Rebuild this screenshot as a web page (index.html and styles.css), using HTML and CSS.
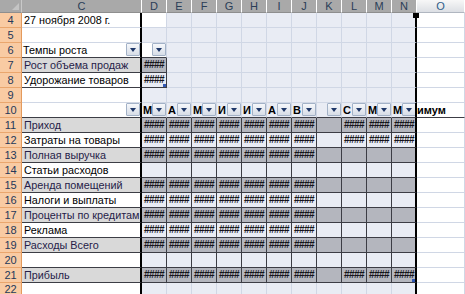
FILE: index.html
```html
<!DOCTYPE html>
<html lang="ru">
<head>
  <meta charset="UTF-8">
  <title>Бюджет</title>
  <link rel="stylesheet" href="styles.css">
</head>
<body>

<div class="sheet">
  <!-- Заголовки столбцов -->
  <div class="row hdr">
    <div class="corner"></div>
    <div>C</div><div>D</div><div>E</div><div>F</div><div>G</div><div>H</div>
    <div>I</div><div>J</div><div>K</div><div>L</div><div>M</div><div>N</div>
    <div class="oh">O</div>
  </div>

  <div class="row">
    <div class="rh">4</div>
    <div class="c">27 ноября 2008 г.</div>
    <div class="w"></div>
    <div></div><div></div><div></div><div></div><div></div><div></div><div></div><div></div><div></div>
    <div class="n top"></div>
    <div class="o"></div>
  </div>

  <div class="row">
    <div class="rh">5</div>
    <div class="c"></div>
    <div></div><div></div><div></div><div></div><div></div><div></div><div></div><div></div><div></div><div></div>
    <div class="n"></div>
    <div class="o"></div>
  </div>

  <div class="row">
    <div class="rh">6</div>
    <div class="c k f">Темпы роста<span class="dd"></span></div>
    <div class="w k f"><span class="dd"></span></div>
    <div></div><div></div><div></div><div></div><div></div><div></div><div></div><div></div><div></div>
    <div class="n"></div>
    <div class="o"></div>
  </div>

  <div class="row alt">
    <div class="rh">7</div>
    <div class="c k">Рост объема продаж</div>
    <div class="d">####</div>
    <div></div><div></div><div></div><div></div><div></div><div></div><div></div><div></div><div></div>
    <div class="n"></div>
    <div class="o"></div>
  </div>

  <div class="row">
    <div class="rh">8</div>
    <div class="c k">Удорожание товаров</div>
    <div class="d sel">####</div>
    <div></div><div></div><div></div><div></div><div></div><div></div><div></div><div></div><div></div>
    <div class="n"></div>
    <div class="o"></div>
  </div>

  <div class="row">
    <div class="rh">9</div>
    <div class="c"></div>
    <div></div><div></div><div></div><div></div><div></div><div></div><div></div><div></div><div></div><div></div>
    <div class="n"></div>
    <div class="o"></div>
  </div>

  <!-- Строка фильтров -->
  <div class="row flt">
    <div class="rh">10</div>
    <div class="c k f"><span class="dd"></span></div>
    <div class="f b">М<span class="dd"></span></div>
    <div class="f b">А<span class="dd"></span></div>
    <div class="f b">М<span class="dd"></span></div>
    <div class="f b">И<span class="dd"></span></div>
    <div class="f b">И<span class="dd"></span></div>
    <div class="f b">А<span class="dd"></span></div>
    <div class="f b">В<span class="dd"></span></div>
    <div class="f b"><span class="dd"></span></div>
    <div class="f b">С<span class="dd"></span></div>
    <div class="f b">М<span class="dd"></span></div>
    <div class="f b n">М<span class="dd"></span></div>
    <div class="o b">имум</div>
  </div>

  <div class="row alt">
    <div class="rh">11</div>
    <div class="c k">Приход</div>
    <div class="d">####</div><div class="d">####</div><div class="d">####</div><div class="d">####</div>
    <div class="d">####</div><div class="d">####</div><div class="d">####</div>
    <div class="d"></div>
    <div class="d">####</div><div class="d">####</div><div class="d n">####</div>
    <div class="o"></div>
  </div>

  <div class="row">
    <div class="rh">12</div>
    <div class="c k">Затраты на товары</div>
    <div class="d">####</div><div class="d">####</div><div class="d">####</div><div class="d">####</div>
    <div class="d">####</div><div class="d">####</div><div class="d">####</div>
    <div class="d"></div>
    <div class="d">####</div><div class="d">####</div><div class="d n">####</div>
    <div class="o"></div>
  </div>

  <div class="row alt">
    <div class="rh">13</div>
    <div class="c k">Полная выручка</div>
    <div class="d">####</div><div class="d">####</div><div class="d">####</div><div class="d">####</div>
    <div class="d">####</div><div class="d">####</div><div class="d">####</div>
    <div class="d"></div><div class="d"></div><div class="d"></div><div class="d n"></div>
    <div class="o"></div>
  </div>

  <div class="row">
    <div class="rh">14</div>
    <div class="c k">Статьи расходов</div>
    <div class="d"></div><div class="d"></div><div class="d"></div><div class="d"></div>
    <div class="d"></div><div class="d"></div><div class="d"></div>
    <div class="d"></div><div class="d"></div><div class="d"></div><div class="d n"></div>
    <div class="o"></div>
  </div>

  <div class="row alt">
    <div class="rh">15</div>
    <div class="c k">Аренда помещений</div>
    <div class="d">####</div><div class="d">####</div><div class="d">####</div><div class="d">####</div>
    <div class="d">####</div><div class="d">####</div><div class="d">####</div>
    <div class="d"></div><div class="d"></div><div class="d"></div><div class="d n"></div>
    <div class="o"></div>
  </div>

  <div class="row">
    <div class="rh">16</div>
    <div class="c k">Налоги и выплаты</div>
    <div class="d">####</div><div class="d">####</div><div class="d">####</div><div class="d">####</div>
    <div class="d">####</div><div class="d">####</div><div class="d">####</div>
    <div class="d"></div><div class="d"></div><div class="d"></div><div class="d n"></div>
    <div class="o"></div>
  </div>

  <div class="row alt">
    <div class="rh">17</div>
    <div class="c k">Проценты по кредитам</div>
    <div class="d">####</div><div class="d">####</div><div class="d">####</div><div class="d">####</div>
    <div class="d">####</div><div class="d">####</div><div class="d">####</div>
    <div class="d"></div><div class="d"></div><div class="d"></div><div class="d n"></div>
    <div class="o"></div>
  </div>

  <div class="row">
    <div class="rh">18</div>
    <div class="c k">Реклама</div>
    <div class="d">####</div><div class="d">####</div><div class="d">####</div><div class="d">####</div>
    <div class="d">####</div><div class="d">####</div><div class="d">####</div>
    <div class="d"></div><div class="d"></div><div class="d"></div><div class="d n"></div>
    <div class="o"></div>
  </div>

  <div class="row alt">
    <div class="rh">19</div>
    <div class="c k">Расходы Всего</div>
    <div class="d">####</div><div class="d">####</div><div class="d">####</div><div class="d">####</div>
    <div class="d">####</div><div class="d">####</div><div class="d">####</div>
    <div class="d"></div><div class="d"></div><div class="d"></div><div class="d n"></div>
    <div class="o"></div>
  </div>

  <div class="row">
    <div class="rh">20</div>
    <div class="c k"></div>
    <div class="d"></div><div class="d"></div><div class="d"></div><div class="d"></div>
    <div class="d"></div><div class="d"></div><div class="d"></div>
    <div class="d"></div><div class="d"></div><div class="d"></div><div class="d n"></div>
    <div class="o"></div>
  </div>

  <div class="row alt">
    <div class="rh">21</div>
    <div class="c k">Прибыль</div>
    <div class="d">####</div><div class="d">####</div><div class="d">####</div><div class="d">####</div>
    <div class="d">####</div><div class="d">####</div><div class="d">####</div>
    <div class="d"></div>
    <div class="d">####</div><div class="d">####</div><div class="d n sel">####</div>
    <div class="o"></div>
  </div>

  <div class="row last">
    <div class="rh">22</div>
    <div class="c"></div>
    <div></div><div></div><div></div><div></div><div></div><div></div><div></div><div></div><div></div><div></div>
    <div class="n"></div>
    <div class="o"></div>
  </div>
</div>

</body>
</html>
```

FILE: styles.css
```css
:root {
  --grid: #d0d7e5;
  --cell: #e9ecf4;
  --dark: #3c3d45;
  --head: #a9a9a9;
  --row-head: #f9cba3;
}

body {
  margin: 0;
  background: #fff;
  font-family: 'Liberation Sans', Arial, sans-serif;
  font-size: 10.8px;
  color: #000;
  overflow: hidden;
}

.sheet {
  width: 465px;
  height: 294px;
  overflow: hidden;
}

.row {
  display: grid;
  grid-template-columns: 22px 120px repeat(11, 25px) 1fr;
  height: 15px;
}

.row > div {
  box-sizing: border-box;
  background: var(--cell);
  border-right: 1px solid var(--grid);
  border-bottom: 1px solid var(--grid);
  line-height: 14px;
  white-space: nowrap;
  overflow: hidden;
}

/* Заголовки столбцов */
.hdr {
  height: 13px;
}

.hdr > div {
  background: var(--head);
  border-right: 1px solid #fff;
  border-bottom: 1px solid #8e8e8e;
  line-height: 12px;
  text-align: center;
  font-size: 11px;
  color: #2a3d57;
}

.hdr > .corner {
  position: relative;
  border-right-color: #c9c9c9;
}

.corner::after {
  content: '';
  position: absolute;
  right: 2px;
  bottom: 2px;
  border-left: 7px solid transparent;
  border-bottom: 7px solid #c4c4c4;
}

.hdr > .oh {
  background: linear-gradient(#f7f7f7, #dcdfe4);
  border-bottom-color: #b0b6c0;
  color: #2f5d8a;
}

/* Номера строк */
.row > .rh {
  background: var(--row-head);
  border-right: 1px solid #e49a5c;
  border-bottom: 1px solid #eaa66d;
  text-align: center;
  font-size: 11px;
  line-height: 15px;
  color: #25395a;
}

.last > .rh {
  line-height: 13px;
}

/* Столбец C */
.row > .c {
  background: #fff;
  border-right: 2px solid #000;
  padding-left: 2px;
}

.row > .c.k {
  border-bottom-color: var(--dark);
}

.alt > .c {
  background: #d9d9d9;
  color: #261c48;
}

.row > .w {
  background: #fff;
}

.row > .w.k {
  border-bottom-color: var(--dark);
}

.row > .o {
  background: #fff;
}

.row > .n {
  border-right: 2px solid #000;
}

.row > .top {
  position: relative;
  overflow: visible;
}

.top::after {
  content: '';
  position: absolute;
  top: 0;
  right: -4px;
  width: 6px;
  height: 5px;
  background: #000;
}

/* Ячейки с данными */
.row > .d {
  background: var(--cell);
  border-bottom-color: var(--dark);
  border-right-color: var(--dark);
  padding-left: 2px;
  font-size: 10px;
  font-weight: bold;
  letter-spacing: -0.6px;
  color: #15151c;
}

.row > .d.n {
  border-right: 2px solid #000;
}

.alt > .d {
  background: #b4b6be;
}

.row > .sel {
  position: relative;
}

.sel::after {
  content: '';
  position: absolute;
  right: 0;
  bottom: 0;
  width: 3px;
  height: 3px;
  background: #3158b4;
}

/* Фильтры */
.flt > div {
  border-bottom-color: var(--dark);
}

.row > .f {
  display: flex;
  align-items: flex-start;
  padding-left: 1px;
}

.row > .b {
  font-weight: bold;
  font-size: 11px;
}

.dd {
  position: relative;
  flex: none;
  margin-left: auto;
  width: 14px;
  height: 13px;
  box-sizing: border-box;
  border: 1px solid #a3b2c7;
  border-radius: 1px;
  background: linear-gradient(#f6f8fb, #d7dde7);
}

.dd::after {
  content: '';
  position: absolute;
  left: 3px;
  top: 4px;
  border-left: 3.5px solid transparent;
  border-right: 3.5px solid transparent;
  border-top: 4px solid #1f3869;
}
```
